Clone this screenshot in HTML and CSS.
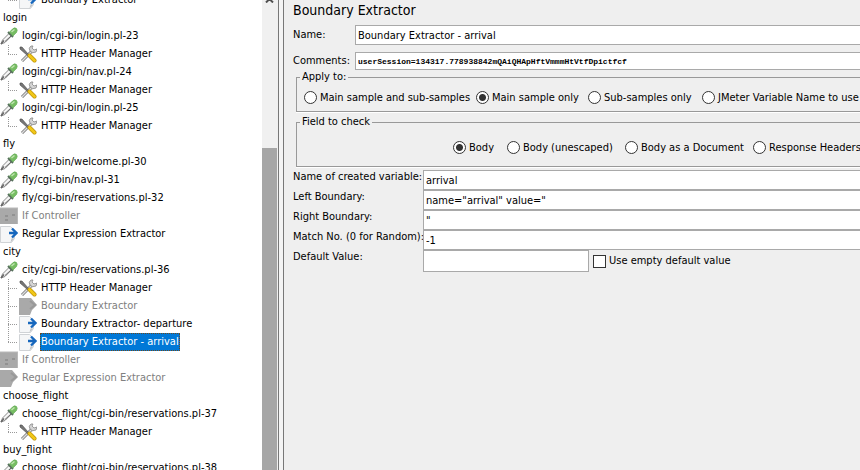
FILE: index.html
```
<!DOCTYPE html>
<html lang="en">
<head>
<meta charset="utf-8">
<title>Boundary Extractor</title>
<link rel="stylesheet" href="styles.css">
</head>
<body>
<svg class="defs" aria-hidden="true">
  <symbol id="sampler" viewBox="0 0 18 18">
    <path d="M1 17 2.500 13 9 6.500l2.500 2.500L5 15.500z" fill="#f6f6f6" stroke="#8a8a8a"/>
    <path d="m1 17 3-3.500" stroke="#666" stroke-width="1.500"/>
    <path d="m5 14.500 6-5.500" stroke="#666"/>
    <path d="m8 5 5 5" stroke="#55705a" stroke-width="2"/>
    <path d="m9.500 5 3-3q2-2 4-.5 1.500 1.500 0 4l-3.500 3.500z" fill="#76bd62" stroke="#5fa653" stroke-width=".6"/>
    <path d="m11.500 5 3-2.500" stroke="#c3e6b3" stroke-width="1.300"/>
  </symbol>
  <symbol id="tools" viewBox="0 0 18 18">
    <path d="m3 16 10-10" stroke="#777" stroke-width="3"/>
    <path d="m3 16 10-10" stroke="#dedede" stroke-width="1.400"/>
    <path d="M12 1q-3 2-1 5t6 1l1-3-3 1-2-2 1-2z" fill="#d5d5d5" stroke="#888" stroke-width=".8"/>
    <path d="m1 2 2 0 7 8-1 1-8-7z" fill="#777" stroke="#444" stroke-width=".6"/>
    <path d="m10.500 10.500 5 5" stroke="#b98d00" stroke-width="4" stroke-linecap="round"/>
    <path d="m10.500 10.500 5 5" stroke="#f1c718" stroke-width="2.800" stroke-linecap="round"/>
  </symbol>
  <symbol id="extractor" viewBox="0 0 18 18">
    <path d="M.5 1.500h10l4 4v8l-3 4H.5z" fill="#f5f6f7" stroke="#d0d3d6"/>
    <path d="m10.500 17.500 1-4h3z" fill="#bfc3c7"/>
    <path d="M9 8h7M12 3.500 16.500 8 12 12.500" fill="none" stroke="#1767bd" stroke-width="2.400"/>
  </symbol>
  <symbol id="extractor-off" viewBox="0 0 18 18">
    <path d="M0 1h12l6 7-5 5-2 5H0z" fill="#a9a9a9"/>
    <path d="m11 4 5 4-5 4" fill="none" stroke="#999" stroke-width="2"/>
  </symbol>
  <symbol id="controller-off" viewBox="0 0 18 18">
    <path d="M0 1h18v16H0z" fill="#a9a9a9"/>
    <path d="M0 1h18M17.500 1v16" stroke="#b9b9b9"/>
    <path d="M5 9h3M5 13h3M12 8h3" stroke="#929292" stroke-width="2"/>
  </symbol>
</svg>
<div class="app">
  <nav class="sidebar" aria-label="Test plan">
    <ul class="tree">
      <li><ul><li><ul>
        <li><span class="node"><svg><use href="#extractor"/></svg><span class="label">Boundary Extractor</span></span></li>
      </ul></li></ul></li>
      <li><span class="node">login</span>
        <ul>
          <li><span class="node"><svg><use href="#sampler"/></svg><span class="label">login/cgi-bin/login.pl-23</span></span>
            <ul><li><span class="node"><svg><use href="#tools"/></svg><span class="label">HTTP Header Manager</span></span></li></ul></li>
          <li><span class="node"><svg><use href="#sampler"/></svg><span class="label">login/cgi-bin/nav.pl-24</span></span>
            <ul><li><span class="node"><svg><use href="#tools"/></svg><span class="label">HTTP Header Manager</span></span></li></ul></li>
          <li><span class="node"><svg><use href="#sampler"/></svg><span class="label">login/cgi-bin/login.pl-25</span></span>
            <ul><li><span class="node"><svg><use href="#tools"/></svg><span class="label">HTTP Header Manager</span></span></li></ul></li>
        </ul></li>
      <li><span class="node">fly</span>
        <ul>
          <li><span class="node"><svg><use href="#sampler"/></svg><span class="label">fly/cgi-bin/welcome.pl-30</span></span></li>
          <li><span class="node"><svg><use href="#sampler"/></svg><span class="label">fly/cgi-bin/nav.pl-31</span></span></li>
          <li><span class="node"><svg><use href="#sampler"/></svg><span class="label">fly/cgi-bin/reservations.pl-32</span></span></li>
          <li><span class="node disabled"><svg><use href="#controller-off"/></svg><span class="label">If Controller</span></span></li>
          <li><span class="node"><svg><use href="#extractor"/></svg><span class="label">Regular Expression Extractor</span></span></li>
        </ul></li>
      <li><span class="node">city</span>
        <ul>
          <li><span class="node"><svg><use href="#sampler"/></svg><span class="label">city/cgi-bin/reservations.pl-36</span></span>
            <ul>
              <li><span class="node"><svg><use href="#tools"/></svg><span class="label">HTTP Header Manager</span></span></li>
              <li><span class="node disabled"><svg><use href="#extractor-off"/></svg><span class="label">Boundary Extractor</span></span></li>
              <li><span class="node"><svg><use href="#extractor"/></svg><span class="label">Boundary Extractor- departure</span></span></li>
              <li><span class="node selected"><svg><use href="#extractor"/></svg><span class="label">Boundary Extractor - arrival</span></span></li>
            </ul></li>
          <li><span class="node disabled"><svg><use href="#controller-off"/></svg><span class="label">If Controller</span></span></li>
          <li><span class="node disabled"><svg><use href="#extractor-off"/></svg><span class="label">Regular Expression Extractor</span></span></li>
        </ul></li>
      <li><span class="node">choose_flight</span>
        <ul>
          <li><span class="node"><svg><use href="#sampler"/></svg><span class="label">choose_flight/cgi-bin/reservations.pl-37</span></span>
            <ul><li><span class="node"><svg><use href="#tools"/></svg><span class="label">HTTP Header Manager</span></span></li></ul></li>
        </ul></li>
      <li><span class="node">buy_flight</span>
        <ul>
          <li><span class="node"><svg><use href="#sampler"/></svg><span class="label">choose_flight/cgi-bin/reservations.pl-38</span></span></li>
        </ul></li>
    </ul>
    <div class="scrollbar"><svg class="up" viewBox="0 0 9 5"><path d="M1 4.500 4.500 1 8 4.500" fill="none" stroke="#505050" stroke-width="2"/></svg><div class="thumb"></div></div>
  </nav>
  <div class="divider"></div>
  <main class="panel">
    <h1>Boundary Extractor</h1>
    <div class="head">
      <label for="name">Name:</label>
      <input id="name" class="field" type="text" value="Boundary Extractor - arrival">
      <label for="comments">Comments:</label>
      <input id="comments" class="field mono" type="text" value="userSession=134317.778938842mQAiQHApHftVmmmHtVtfDpictfcf">
    </div>
    <fieldset class="group apply">
      <legend>Apply to:</legend>
      <div class="choices">
        <label><input type="radio" name="apply">Main sample and sub-samples</label>
        <label><input type="radio" name="apply" checked>Main sample only</label>
        <label><input type="radio" name="apply">Sub-samples only</label>
        <label><input type="radio" name="apply">JMeter Variable Name to use</label>
      </div>
    </fieldset>
    <fieldset class="group check">
      <legend>Field to check</legend>
      <div class="choices">
        <label><input type="radio" name="check" checked>Body</label>
        <label><input type="radio" name="check">Body (unescaped)</label>
        <label><input type="radio" name="check">Body as a Document</label>
        <label><input type="radio" name="check">Response Headers</label>
      </div>
    </fieldset>
    <div class="params">
      <label for="variable">Name of created variable:</label>
      <input id="variable" class="field" type="text" value="arrival">
      <label for="left">Left Boundary:</label>
      <input id="left" class="field" type="text" value="name=&quot;arrival&quot; value=&quot;">
      <label for="right">Right Boundary:</label>
      <input id="right" class="field" type="text" value="&quot;">
      <label for="match">Match No. (0 for Random):</label>
      <input id="match" class="field" type="text" value="-1">
      <label for="default">Default Value:</label>
      <div class="default">
        <input id="default" class="field" type="text">
        <label><input type="checkbox">Use empty default value</label>
      </div>
    </div>
  </main>
</div>
</body>
</html>
```
FILE: styles.css
```
* { box-sizing: border-box; }

body {
  margin: 0;
  background: #efefef;
  color: #000;
  font-family: "DejaVu Sans Condensed", "DejaVu Sans", Tahoma, sans-serif;
  font-size: 11px;
  line-height: 14px;
}

.defs { position: absolute; width: 0; height: 0; }

.app {
  display: grid;
  grid-template-columns: 277px 7px minmax(0, 1fr);
  height: 100vh;
  overflow: hidden;
}

/* Test plan tree */
.sidebar {
  display: grid;
  grid-template-columns: minmax(0, 1fr) 15px;
  background: #fff;
  overflow: hidden;
}

ul { list-style: none; margin: 0; padding: 0; }
.tree { margin-top: -9px; white-space: nowrap; }

.node {
  display: flex;
  align-items: center;
  gap: 3px;
  height: 18px;
  padding-left: 3px;
}
.node svg { flex: none; width: 18px; height: 18px; }
.tree ul .node { padding-left: 0; }
.tree ul ul { padding-left: 8px; }
.tree ul ul .node { padding-left: 11px; }
.tree ul ul li {
  background:
    repeating-linear-gradient(90deg, #999 0 1px, transparent 1px 2px) 0 9px / 10px 1px no-repeat,
    repeating-linear-gradient(#999 0 1px, transparent 1px 2px) 0 0 / 1px 100% no-repeat;
}
.tree ul ul li:last-child { background-size: 10px 1px, 1px 10px; }

.label { padding: 2px 1px; }
.disabled { color: #808080; }
.selected .label {
  background: #0078d7;
  color: #fff;
  outline: 1px dotted #6b4a20;
  outline-offset: -1px;
}

.scrollbar {
  display: flex;
  flex-direction: column;
  align-items: center;
  background: #f0f0f0;
}
.up { width: 9px; height: 5px; flex: none; margin-top: -2px; }
.thumb { width: 100%; flex: 1; margin-top: 145px; background: #a6a6a6; }

.divider {
  border: solid #777;
  border-width: 0 1px;
  margin-left: 1px;
  background: #f4f4f4;
}

/* Settings */
.panel { padding: 0 0 0 9px; overflow: hidden; white-space: nowrap; }

h1 {
  margin: 0;
  height: 25px;
  font-size: 14px;
  font-weight: 400;
  line-height: 20px;
}

.head {
  display: grid;
  grid-template-columns: 62px minmax(0, 1fr);
  row-gap: 7px;
  align-items: center;
}

.field {
  width: 100%;
  height: 20px;
  padding: 0 2px;
  border: 1px solid #a9a9a9;
  border-right: 0;
  border-radius: 0;
  background: #fff;
  color: #000;
  font: inherit;
}
.head .mono {
  height: 18px;
  font-family: "Liberation Mono", monospace;
  font-size: 8px;
  font-weight: 700;
}

.group {
  min-width: 0;
  margin: 0 0 0 3px;
  padding: 0;
  border: 1px solid #999;
  border-right: 0;
  box-shadow: 0 1px #fff;
}
.group legend { margin-left: 3px; padding: 0 2px; }

.choices { display: grid; align-items: center; }
.choices label, .default label { display: flex; align-items: center; gap: 3px; }

.apply .choices {
  grid-template-columns: 172px 112px 114px 160px;
  height: 27px;
  padding-left: 7px;
}
.check { margin-top: 3px; }
.check .choices {
  grid-template-columns: 54px 118px 128px 120px;
  height: 37px;
  padding-left: 156px;
}

input[type="radio"], input[type="checkbox"] {
  appearance: none;
  flex: none;
  width: 13px;
  height: 13px;
  margin: 0;
  border: 1px solid #333;
  background: #fff;
}
input[type="radio"] { border-radius: 50%; }
input[type="radio"]:checked {
  background: radial-gradient(circle, #333 0 3px, #fff 4px);
}

.params {
  display: grid;
  grid-template-columns: 130px minmax(0, 1fr);
  margin-top: 3px;
}
.default { display: flex; align-items: center; gap: 4px; }
.default .field {
  width: 166px;
  height: 22px;
  border-right: 1px solid #a9a9a9;
}
```
